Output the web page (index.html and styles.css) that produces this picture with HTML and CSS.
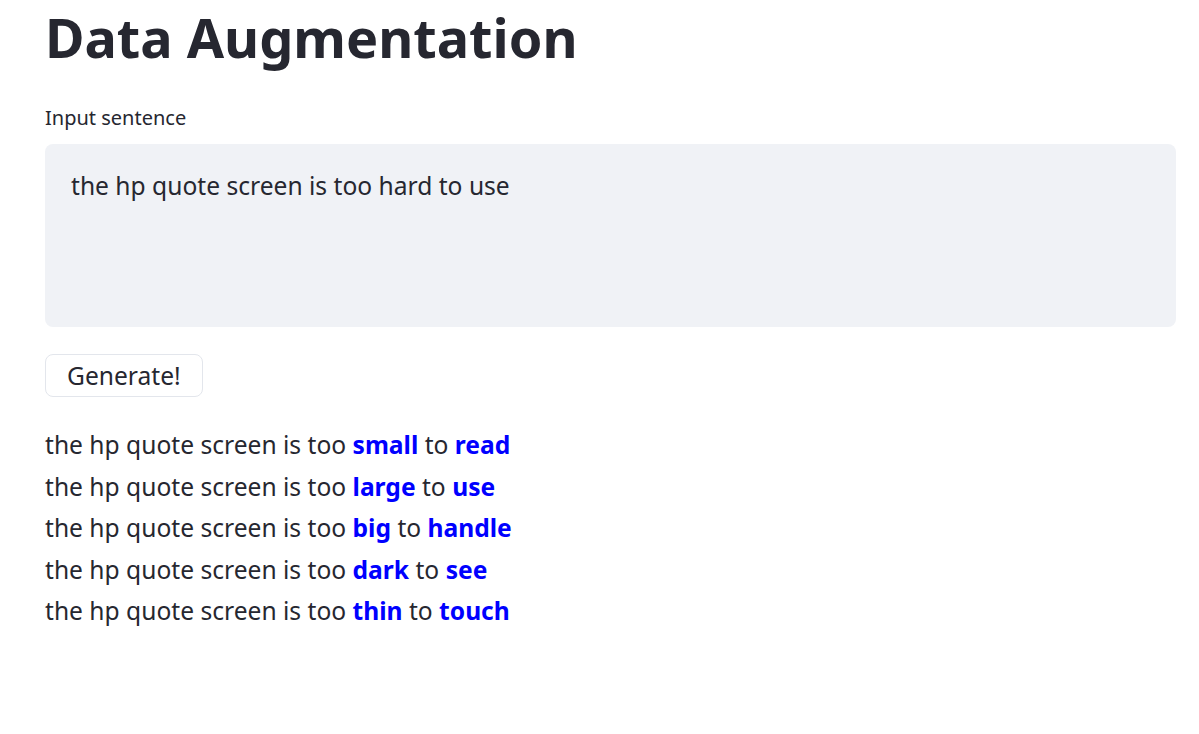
FILE: index.html
```html
<!DOCTYPE html>
<html>
<head>
<meta charset="utf-8">
<link rel="stylesheet" href="styles.css">
</head>
<body>
<main class="main">
  <h1 class="title">Data Augmentation</h1>
  <label class="label" for="inp">Input sentence</label>
  <div class="textarea" id="inp">the hp quote screen is too hard to use</div>
  <button class="btn">Generate!</button>
  <div class="results">
    <p class="line">the hp quote screen is too <b class="hl">small</b> to <b class="hl">read</b></p>
    <p class="line">the hp quote screen is too <b class="hl">large</b> to <b class="hl">use</b></p>
    <p class="line">the hp quote screen is too <b class="hl">big</b> to <b class="hl">handle</b></p>
    <p class="line">the hp quote screen is too <b class="hl">dark</b> to <b class="hl">see</b></p>
    <p class="line">the hp quote screen is too <b class="hl">thin</b> to <b class="hl">touch</b></p>
  </div>
</main>
</body>
</html>
```
FILE: styles.css
```css
html, body {
  margin: 0;
  padding: 0;
  background: #ffffff;
  color: #262730;
  font-family: "Noto Sans", "Open Sans", sans-serif;
}
.main {
  padding: 0 23px 0 45px;
  display: flex;
  flex-direction: column;
  align-items: flex-start;
}
.title {
  margin: 5px 0 0 0;
  font-size: 54px;
  font-weight: 700;
  line-height: 64px;
  letter-spacing: 0;
}
.label {
  margin-top: 36px;
  font-size: 20px;
  line-height: 26px;
}
.textarea {
  margin-top: 13px;
  box-sizing: border-box;
  width: 100%;
  height: 183px;
  background: #f0f2f6;
  border-radius: 8px;
  padding: 26px 26px;
  font-size: 24.6px;
  line-height: 32px;
  align-self: stretch;
}
.btn {
  margin-top: 27px;
  height: 43px;
  padding: 0 21px;
  background: #ffffff;
  border: 1px solid #e3e6ec;
  border-radius: 8px;
  font-family: inherit;
  font-size: 24.6px;
  color: #262730;
}
.results {
  margin-top: 27px;
}
.line {
  margin: 0;
  font-size: 24.6px;
  line-height: 41.5px;
}
.hl {
  color: #0000ff;
  font-weight: 700;
}
```
